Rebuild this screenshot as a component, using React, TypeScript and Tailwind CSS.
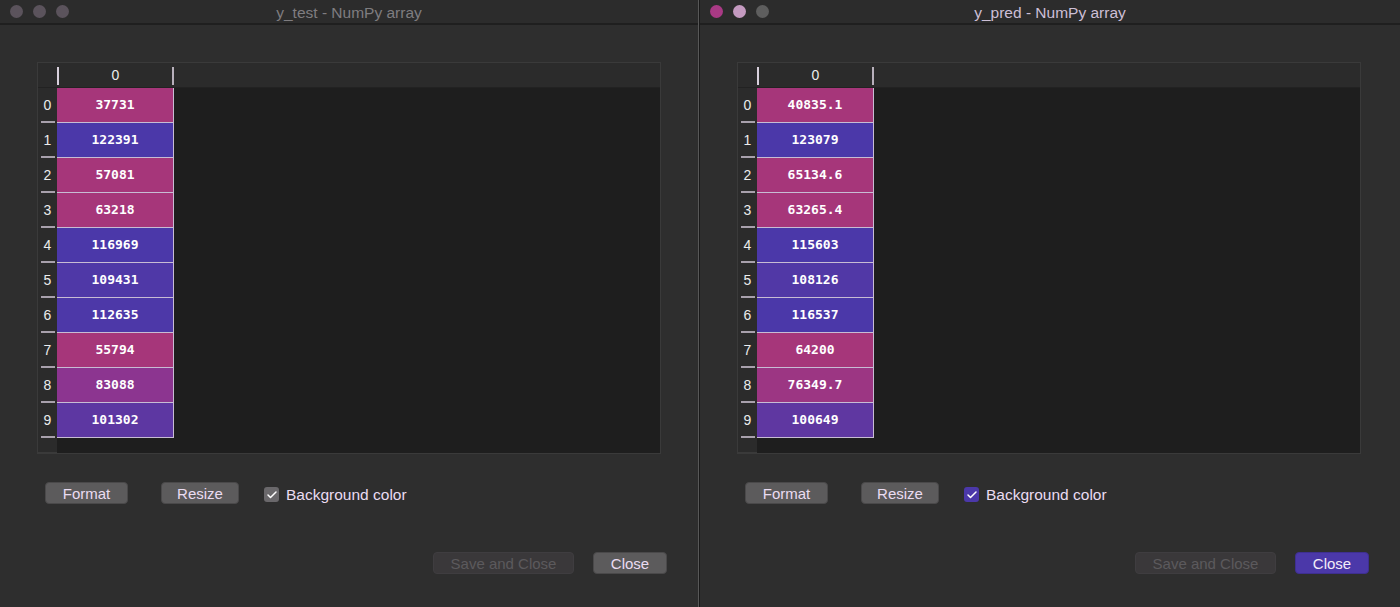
import { Check } from "lucide-react";

type Row = { value: string; color: string };

const yTest: Row[] = [
  { value: "37731", color: "bg-[#a6367a]" },
  { value: "122391", color: "bg-[#4b38a9]" },
  { value: "57081", color: "bg-[#a6367a]" },
  { value: "63218", color: "bg-[#a6367a]" },
  { value: "116969", color: "bg-[#4b38a9]" },
  { value: "109431", color: "bg-[#4f38a7]" },
  { value: "112635", color: "bg-[#4d38a8]" },
  { value: "55794", color: "bg-[#a6367a]" },
  { value: "83088", color: "bg-[#8c3590]" },
  { value: "101302", color: "bg-[#5d37a2]" },
];

const yPred: Row[] = [
  { value: "40835.1", color: "bg-[#a6367a]" },
  { value: "123079", color: "bg-[#4b38a9]" },
  { value: "65134.6", color: "bg-[#a6367a]" },
  { value: "63265.4", color: "bg-[#a6367a]" },
  { value: "115603", color: "bg-[#4b38a9]" },
  { value: "108126", color: "bg-[#5138a6]" },
  { value: "116537", color: "bg-[#4b38a9]" },
  { value: "64200", color: "bg-[#a6367a]" },
  { value: "76349.7", color: "bg-[#9c3683]" },
  { value: "100649", color: "bg-[#5f37a1]" },
];

function TrafficLights({ active }: { active: boolean }) {
  return (
    <div className="flex items-center gap-[10px]">
      <span className={`w-[13px] h-[13px] rounded-full ${active ? "bg-[#a93a85]" : "bg-[#5b535c]"}`} />
      <span className={`w-[13px] h-[13px] rounded-full ${active ? "bg-[#c49ac0]" : "bg-[#5b535c]"}`} />
      <span className={`w-[13px] h-[13px] rounded-full ${active ? "bg-[#5e5e5e]" : "bg-[#5b535c]"}`} />
    </div>
  );
}

function Button({ label, width, variant = "normal" }: { label: string; width: string; variant?: "normal" | "disabled" | "primary" }) {
  const styles =
    variant === "primary"
      ? "bg-[#4b38a9] border-[#3e2f90] text-[#f2ecf8]"
      : variant === "disabled"
        ? "bg-[#3a383a] border-[#3f3d40] text-[#5c5a5d]"
        : "bg-[#5c5b5c] border-[#4a494a] text-[#eadcf2]";
  return (
    <div className={`${width} h-[22px] rounded-[4px] border flex items-center justify-center text-[15px] leading-none ${styles}`}>
      {label}
    </div>
  );
}

function Table({ rows }: { rows: Row[] }) {
  return (
    <div className="w-[624px] h-[392px] bg-[#1e1e1e] border border-[#3a3a3a] flex flex-col">
      <div className="flex h-[25px] bg-[#2b2b2b] border-b border-[#222]">
        <div className="w-[19px]" />
        <div className="w-[117px] relative flex items-center justify-center text-[14px] text-[#ececec]">
          <span className="absolute left-0 top-[4px] w-[2px] h-[18px] bg-[#d8d0dc]" />
          0
          <span className="absolute right-0 top-[4px] w-[2px] h-[18px] bg-[#b8b0bc]" />
        </div>
        <div className="flex-1" />
      </div>
      <div className="flex flex-1">
        <div className="w-[19px] bg-[#2b2b2b] flex flex-col">
          {rows.map((_, i) => (
            <div key={i} className="h-[35px] relative flex items-center justify-center text-[14px] text-[#ececec]">
              {i}
              <span className="absolute bottom-0 left-[3px] w-[14px] h-[2px] bg-[#a8a0ac]" />
            </div>
          ))}
          <div className="flex-1 border-b border-[#3a3a3a]" />
        </div>
        <div className="w-[117px] flex flex-col">
          {rows.map((r, i) => (
            <div
              key={i}
              className={`h-[35px] ${r.color} border-b border-r border-[#c8bcd4] flex items-center justify-center text-[13px] font-bold text-white`}
              style={{ fontFamily: '"DejaVu Sans Mono", monospace' }}
            >
              {r.value}
            </div>
          ))}
        </div>
        <div className="flex-1" />
      </div>
    </div>
  );
}

function ArrayWindow({ title, rows, active, width }: { title: string; rows: Row[]; active: boolean; width: string }) {
  return (
    <div className={`${width} h-full flex flex-col bg-[#2e2e2e]`}>
      <div className="h-[25px] flex items-center px-[10px] bg-[#2c2c2c] border-b-2 border-[#1f1f1f] relative">
        <TrafficLights active={active} />
        <div className={`absolute inset-0 pt-[2px] flex items-center justify-center text-[15.5px] ${active ? "text-[#cdbfd6]" : "text-[#7f7d80]"}`}>
          {title}
        </div>
      </div>
      <div className="pl-[37px] pt-[37px]">
        <Table rows={rows} />
      </div>
      <div className="flex items-center pl-[45px] pt-[26px]">
        <Button label="Format" width="w-[83px]" />
        <div className="w-[33px]" />
        <Button label="Resize" width="w-[78px]" />
        <div className="ml-[25px] flex items-center gap-[7px] mt-[3px]">
          <span
            className={`w-[15px] h-[15px] rounded-[3px] flex items-center justify-center ${active ? "bg-[#4b38a9]" : "bg-[#6a686b]"}`}
          >
            <Check className="w-[12px] h-[12px] text-white" strokeWidth={3} />
          </span>
          <span className="text-[15.5px] text-[#eadcf2]">Background color</span>
        </div>
      </div>
      <div className="flex justify-end items-center gap-[19px] pr-[31px] pt-[46px]">
        <Button label="Save and Close" width="w-[141px]" variant="disabled" />
        <Button label="Close" width="w-[74px]" variant={active ? "primary" : "normal"} />
      </div>
    </div>
  );
}

export default function App() {
  return (
    <div
      className="w-[1400px] h-[607px] flex bg-[#2e2e2e] overflow-hidden"
      style={{ fontFamily: '"Liberation Sans", Arial, sans-serif' }}
    >
      <ArrayWindow title="y_test - NumPy array" rows={yTest} active={false} width="w-[698px]" />
      <div className="w-[1px] bg-[#585858]" />
      <div className="w-[1px] bg-[#1a1a1a]" />
      <ArrayWindow title="y_pred - NumPy array" rows={yPred} active={true} width="w-[700px]" />
    </div>
  );
}
